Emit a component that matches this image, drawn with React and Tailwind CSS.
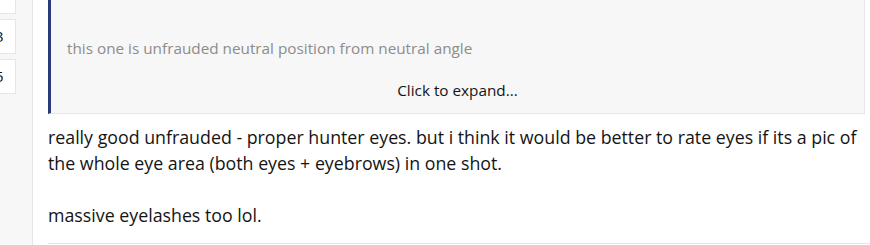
export default function App() {
  const font = { fontFamily: '"Segoe UI", "Open Sans", sans-serif' };
  return (
    <div className="flex w-[870px] h-[245px] overflow-hidden bg-white" style={font}>
      {/* left rail with the cut-off vote boxes */}
      <div className="w-[33px] shrink-0 bg-[#f7f7f7] border-r border-[#e4e4e4] flex flex-col gap-[5px]">
        {['7', '3', '5'].map((n, i) => (
          <div
            key={n}
            className={`w-[40px] -ml-[24px] bg-white border border-[#e6e6e6] flex items-center pl-[18px] text-[15px] text-[#141414] ${i === 0 ? 'h-[15px] -mt-[1px] border-t-0' : 'h-[35px]'}`}
          >
            {i === 0 ? '' : n}
          </div>
        ))}
      </div>

      {/* post body */}
      <div className="flex-1 pl-[15px] flex flex-col">
        <div className="h-[114px] mr-[5px] bg-[#f7f7f7] border-l-[3px] border-l-[#283c7c] border-r border-b border-r-[#e6e6e6] border-b-[#e6e6e6] flex flex-col">
          <div className="pl-[16px] pt-[38px] text-[15.3px] leading-[21px] text-[#8c8c8c]">
            this one is unfrauded neutral position from neutral angle
          </div>
          <div className="mt-[21px] text-center text-[15.3px] leading-[21px] text-[#141414]">
            Click to expand...
          </div>
        </div>

        <div className="pt-[10px] text-[17.8px] leading-[26px] text-[#141414]">
          <p>
            really good unfrauded - proper hunter eyes. but i think it would be better to rate eyes if its a pic of the
            whole eye area (both eyes + eyebrows) in one shot.
          </p>
          <p className="mt-[26px]">massive eyelashes too lol.</p>
        </div>

        <div className="mt-auto mb-[1px] border-b border-[#e6e6e6]" />
      </div>
    </div>
  );
}
